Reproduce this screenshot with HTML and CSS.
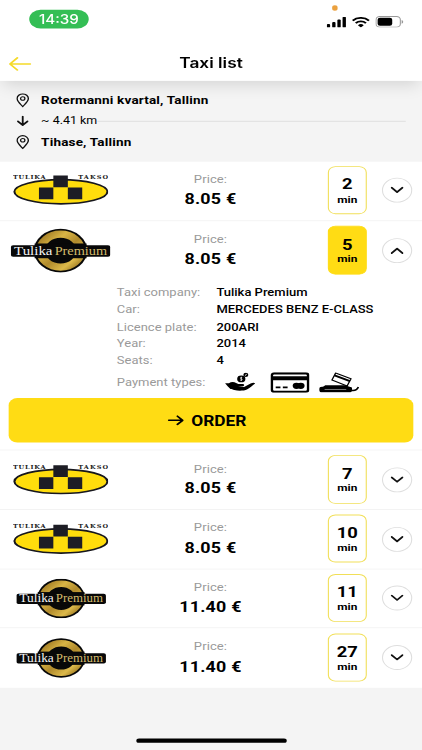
FILE: index.html
```html
<!DOCTYPE html>
<html lang="en">
<head>
    <meta charset="UTF-8">
    <meta name="viewport" content="width=device-width, initial-scale=1.0">
    <title>Taxi list</title>
    <link rel="stylesheet" href="styles.css">
</head>
<body>
    <!-- Shared icons and logos -->
    <svg class="defs" width="0" height="0">
        <defs>
            <linearGradient id="gold" x1="0" y1="0" x2="1" y2="1">
                <stop offset="0" stop-color="#9a7420"/>
                <stop offset="0.3" stop-color="#d9b545"/>
                <stop offset="0.55" stop-color="#b08a2c"/>
                <stop offset="0.8" stop-color="#dcb94a"/>
                <stop offset="1" stop-color="#94701c"/>
            </linearGradient>
            <symbol id="logo-takso" viewBox="0 0 88 38">
                <ellipse cx="44.3" cy="20.8" rx="43" ry="13.6" fill="#ffdd0c" stroke="#17171d" stroke-width="1.9"/>
                <path d="M37.3 2.5h13.4v13.3H37.3zM24 16h13.3v13.3H24zM50.7 16H64v13.3H50.7z" fill="#1d1d25"/>
                <text x="0" y="6.4" class="takso-text" textLength="30" lengthAdjust="spacing">TULIKA</text>
                <text x="60.3" y="6.4" class="takso-text" textLength="27.7" lengthAdjust="spacing">TAKSO</text>
            </symbol>
            <symbol id="logo-premium" viewBox="0 0 92 50">
                <circle cx="46" cy="25" r="24.6" fill="#080808"/>
                <circle cx="46" cy="25" r="18.5" fill="none" stroke="url(#gold)" stroke-width="8.2"/>
                <rect x="22" y="17" width="48" height="16.6" fill="#080808"/>
                <rect x="0" y="19" width="92" height="12.8" rx="2.2" fill="#080808"/>
                <text x="3" y="30" class="premium-text" fill="#f4f4f4" textLength="35.5" lengthAdjust="spacingAndGlyphs">Tulika</text>
                <text x="40.5" y="30" class="premium-text" fill="#d3bb6c" textLength="48.5" lengthAdjust="spacingAndGlyphs">Premium</text>
            </symbol>
            <symbol id="pin" viewBox="0 0 12 16">
                <path d="M6 15C4.6 13 .8 9.2.8 5.9a5.2 5.2 0 0 1 10.4 0C11.2 9.2 7.4 13 6 15z" fill="none" stroke="#111" stroke-width="1.3"/>
                <circle cx="6" cy="5.9" r="2" fill="none" stroke="#111" stroke-width="1.2"/>
            </symbol>
            <symbol id="chevron" viewBox="0 0 12 8">
                <path d="M1 1.2l5 5 5-5" fill="none" stroke="#111" stroke-width="1.8" stroke-linecap="round" stroke-linejoin="round"/>
            </symbol>
        </defs>
    </svg>

    <div class="screen">
        <header class="header">
            <div class="status-bar">
                <span class="clock">14:39</span>
                <div class="status-icons">
                    <span class="mic-dot"></span>
                    <svg class="signal" viewBox="0 0 18 12">
                        <rect x="0" y="8" width="3.1" height="4" rx="1"/>
                        <rect x="5" y="5.8" width="3.1" height="6.2" rx="1"/>
                        <rect x="9.8" y="3" width="3.1" height="9" rx="1"/>
                        <rect x="14.6" y="0" width="3.1" height="12" rx="1"/>
                    </svg>
                    <svg class="wifi" viewBox="0 0 17 12">
                        <path d="M1 4.2a10.8 10.8 0 0 1 15 0M3.8 7a6.8 6.8 0 0 1 9.4 0" fill="none" stroke="#000" stroke-width="2.1"/>
                        <path d="M8.5 12L5.8 9.3a3.9 3.9 0 0 1 5.4 0z"/>
                    </svg>
                    <svg class="battery" viewBox="0 0 26 13">
                        <rect x="0.5" y="0.5" width="22.5" height="12" rx="3.6" fill="none" stroke="#999"/>
                        <rect x="2" y="2" width="13.5" height="9" rx="2.2"/>
                        <path d="M24.2 4.4v4.2a2.2 2.2 0 0 0 0-4.2z" fill="#999"/>
                    </svg>
                </div>
            </div>
            <div class="title-bar">
                <svg class="back" viewBox="0 0 21 16">
                    <path d="M20 8H1.2M8 1.2L1.2 8 8 14.8" fill="none" stroke="#f5da28" stroke-width="1.8" stroke-linecap="round" stroke-linejoin="round"/>
                </svg>
                <h1>Taxi list</h1>
            </div>
        </header>

        <section class="route">
            <div class="route-row">
                <svg class="pin"><use href="#pin"/></svg>
                <span class="place">Rotermanni kvartal, Tallinn</span>
            </div>
            <div class="route-row">
                <svg class="down" viewBox="0 0 12 12">
                    <path d="M6 1v9.6M1.6 6.6L6 10.8l4.4-4.2" fill="none" stroke="#111" stroke-width="1.7" stroke-linecap="round" stroke-linejoin="round"/>
                </svg>
                <span class="distance">~ 4.41 km</span>
                <span class="route-line"></span>
            </div>
            <div class="route-row">
                <svg class="pin"><use href="#pin"/></svg>
                <span class="place">Tihase, Tallinn</span>
            </div>
        </section>

        <main class="list">
            <article class="taxi">
                <div class="summary">
                    <div class="logo"><svg class="takso"><use href="#logo-takso"/></svg></div>
                    <div class="price"><span>Price:</span><strong>8.05 €</strong></div>
                    <div class="eta"><b>2</b><span>min</span></div>
                    <button class="toggle"><svg><use href="#chevron"/></svg></button>
                </div>
            </article>

            <article class="taxi open">
                <div class="summary">
                    <div class="logo"><svg class="premium"><use href="#logo-premium"/></svg></div>
                    <div class="price"><span>Price:</span><strong>8.05 €</strong></div>
                    <div class="eta"><b>5</b><span>min</span></div>
                    <button class="toggle"><svg><use href="#chevron"/></svg></button>
                </div>
                <dl class="details">
                    <dt>Taxi company:</dt><dd>Tulika Premium</dd>
                    <dt>Car:</dt><dd>MERCEDES BENZ E-CLASS</dd>
                    <dt>Licence plate:</dt><dd>200ARI</dd>
                    <dt>Year:</dt><dd>2014</dd>
                    <dt>Seats:</dt><dd>4</dd>
                    <dt class="pay-label">Payment types:</dt>
                    <dd class="payments">
                        <svg class="cash" viewBox="0 0 28 22">
                            <path d="M0 12.2h3.6c2-1.6 4.6-1.7 6.6-.2l2 1.2h4.2c1.6 0 1.8 2.2.2 2.5l-4.6.3 5.6.6 6-3.9c2-1.3 3.8-1 4.2-.2-2.4 2.2-5 5-7.6 6.8-2.4 1.5-8 1.8-11.6.6-1.6-.5-2.4-1.2-3.6-1.2L2.6 16z"/>
                            <circle cx="15" cy="7.4" r="3.8"/>
                            <circle cx="19.2" cy="2.9" r="2.3"/>
                            <path d="M15.8 5.8c-1.8-.7-2.2 1-.8 1.5s1 2.1-.9 1.5M15 5v4.8" stroke="#fff" stroke-width=".7" fill="none"/>
                            <path d="M18.4 3.6l1.6-1.4" stroke="#fff" stroke-width=".9"/>
                        </svg>
                        <svg class="card" viewBox="0 0 36 23">
                            <rect x="1.2" y="1.2" width="33.6" height="20.6" rx="2.2" fill="none" stroke="#000" stroke-width="2.4"/>
                            <path d="M1 4.5h34v4.3H1z"/>
                            <path d="M4.8 17h4.4M11.4 17h4.4" stroke="#000" stroke-width="1.9"/>
                            <circle cx="24" cy="15.2" r="3.5"/>
                            <circle cx="28" cy="15.2" r="3.5"/>
                        </svg>
                        <svg class="terminal" viewBox="0 0 37 23">
                            <path d="M2.8 17L5.6 14.5H24L30 17.4V19H2.8z"/>
                            <rect x="0" y="16.2" width="30.4" height="6.3" rx="2.6"/>
                            <path d="M5 19.3h20" stroke="#999" stroke-width=".8"/>
                            <path d="M29 20.2c3.6 1 6-.2 7.2-3.6" fill="none" stroke="#000" stroke-width="1.6"/>
                            <path d="M15.2.8L29.4 7.3 25.8 15.4 11.8 8.6z" fill="#fff" stroke="#000" stroke-width="1.2"/>
                            <path d="M14.2 3.4l14.2 6.5" stroke="#000" stroke-width="2"/>
                        </svg>
                    </dd>
                </dl>
                <button class="order">
                    <svg viewBox="0 0 15 12">
                        <path d="M1 6h12.6M9 1.4L13.8 6 9 10.6" fill="none" stroke="#000" stroke-width="1.8" stroke-linecap="round" stroke-linejoin="round"/>
                    </svg>
                    <span>ORDER</span>
                </button>
            </article>

            <article class="taxi">
                <div class="summary">
                    <div class="logo"><svg class="takso"><use href="#logo-takso"/></svg></div>
                    <div class="price"><span>Price:</span><strong>8.05 €</strong></div>
                    <div class="eta"><b>7</b><span>min</span></div>
                    <button class="toggle"><svg><use href="#chevron"/></svg></button>
                </div>
            </article>

            <article class="taxi">
                <div class="summary">
                    <div class="logo"><svg class="takso"><use href="#logo-takso"/></svg></div>
                    <div class="price"><span>Price:</span><strong>8.05 €</strong></div>
                    <div class="eta"><b>10</b><span>min</span></div>
                    <button class="toggle"><svg><use href="#chevron"/></svg></button>
                </div>
            </article>

            <article class="taxi">
                <div class="summary">
                    <div class="logo"><svg class="premium"><use href="#logo-premium"/></svg></div>
                    <div class="price"><span>Price:</span><strong>11.40 €</strong></div>
                    <div class="eta"><b>11</b><span>min</span></div>
                    <button class="toggle"><svg><use href="#chevron"/></svg></button>
                </div>
            </article>

            <article class="taxi">
                <div class="summary">
                    <div class="logo"><svg class="premium"><use href="#logo-premium"/></svg></div>
                    <div class="price"><span>Price:</span><strong>11.40 €</strong></div>
                    <div class="eta"><b>27</b><span>min</span></div>
                    <button class="toggle"><svg><use href="#chevron"/></svg></button>
                </div>
            </article>
        </main>

        <footer class="footer"><span class="home-bar"></span></footer>
    </div>
</body>
</html>
```
FILE: styles.css
```css
* {
    box-sizing: border-box;
}
html {
    overflow: hidden;
}
body {
    margin: 0;
    height: 100vh;
    overflow: hidden;
    background: #f4f4f4;
    font-family: Roboto, "Liberation Sans", sans-serif;
    color: #000;
}
.defs {
    display: block;
}
.screen {
    width: 390px;
    height: 844px;
    margin-bottom: -94px;
    display: flex;
    flex-direction: column;
    transform: scale(1.082, 0.8886);
    transform-origin: 0 0;
    background: #f4f4f4;
}
svg {
    display: block;
    flex: none;
}

/* Header */
.header {
    height: 91px;
    flex: none;
    background: #fff;
    box-shadow: 0 6px 16px -3px rgba(0,0,0,0.14);
    z-index: 1;
}
.status-bar {
    height: 49px;
    padding: 10.5px 18px 0 27px;
    display: flex;
    justify-content: space-between;
    align-items: flex-start;
}
.clock {
    width: 55px;
    height: 21.5px;
    border-radius: 11px;
    background: #34be55;
    color: #fff;
    font: 500 14px/22px Inter, sans-serif;
    text-align: center;
}
.status-icons {
    position: relative;
    display: flex;
    align-items: center;
    gap: 5px;
    margin-top: 7.5px;
    margin-right: -0.5px;
}
.mic-dot {
    position: absolute;
    left: 5px;
    top: -12px;
    width: 5.5px;
    height: 5.5px;
    border-radius: 50%;
    background: #eba13f;
}
.signal {
    width: 18px;
    height: 12px;
}
.wifi {
    width: 17px;
    height: 12px;
}
.battery {
    width: 26px;
    height: 13px;
}
.title-bar {
    height: 42px;
    display: grid;
    grid-template-columns: 21px 1fr 21px;
    align-items: start;
    padding: 0 8px;
}
.back {
    width: 21px;
    height: 16px;
    margin-top: 14.5px;
}
h1 {
    margin: 10.5px 0 0;
    font: 600 16px/20px Inter, sans-serif;
    text-align: center;
}

/* Route */
.route {
    height: 91.3px;
    flex: none;
    padding: 10.2px 15px 0;
}
.route-row {
    height: 23.5px;
    display: flex;
    align-items: center;
}
.pin {
    width: 12px;
    height: 16px;
    margin-right: 11px;
}
.down {
    width: 12px;
    height: 12px;
    margin-right: 11px;
}
.place {
    font-size: 12.5px;
    font-weight: 700;
    letter-spacing: 0.15px;
}
.distance {
    font-size: 11.5px;
}
.route-line {
    flex: 1;
    height: 1px;
    background: #ddd;
}

/* Taxi rows */
.list {
    flex: none;
}
.taxi {
    height: 66.8px;
    background: #fff;
    border-bottom: 1px solid #f1f1f1;
}
.taxi:last-child {
    border-bottom: none;
}
.taxi.open {
    height: 258px;
}
.summary {
    height: 65.8px;
    display: grid;
    grid-template-columns: 112px 165px 1fr 28px;
    align-items: start;
    padding: 0.8px 9px 0 0;
}
.taxi:first-child .summary {
    padding-top: 0;
}
.logo {
    height: 64px;
    display: flex;
    justify-content: center;
    align-items: center;
}
.takso {
    width: 88px;
    height: 38px;
}
.premium {
    width: 83px;
    height: 45px;
}
.open .premium {
    width: 92px;
    height: 50px;
}
.price {
    padding-top: 11.8px;
    display: flex;
    flex-direction: column;
    align-items: center;
}
.price span {
    font-size: 12px;
    line-height: 16px;
    letter-spacing: 0.1px;
    color: #9a9a9a;
}
.price strong {
    margin-top: 4.8px;
    font-size: 16.5px;
    line-height: 20px;
    font-weight: 700;
    letter-spacing: 0.2px;
}
.eta {
    justify-self: end;
    width: 35.4px;
    height: 54.5px;
    margin: 4.3px 14.3px 0 0;
    padding-top: 9.7px;
    border: 1.3px solid #f1df58;
    border-radius: 7px;
    display: flex;
    flex-direction: column;
    align-items: center;
}
.eta b {
    font-size: 17px;
    line-height: 20px;
}
.eta span {
    margin-top: 0.5px;
    font-size: 11px;
    line-height: 13px;
    font-weight: 700;
}
.open .eta {
    background: #ffdc14;
    border-color: #ffdc14;
}
.toggle {
    width: 28px;
    height: 28px;
    margin-top: 18px;
    padding: 0;
    display: grid;
    place-items: center;
    background: #fff;
    border: 1px solid #dedede;
    border-radius: 50%;
}
.toggle svg {
    width: 12px;
    height: 8px;
}
.open .toggle svg {
    transform: rotate(180deg);
}

/* Expanded row */
.details {
    margin: 0;
    padding: 4.5px 0 0 108px;
    display: grid;
    grid-template-columns: 92px 1fr;
    grid-auto-rows: 19.3px;
    align-items: center;
    font-size: 12px;
}
.details dt {
    color: #9a9a9a;
}
.details dd {
    margin: 0;
    font-weight: 500;
}
.details .pay-label {
    padding-top: 9px;
}
.details .payments {
    display: flex;
    align-items: center;
    padding: 9px 0 0 8px;
}
.cash {
    width: 28px;
    height: 22px;
    margin-right: 14px;
}
.card {
    width: 36px;
    height: 23px;
    margin-right: 9px;
}
.terminal {
    width: 37px;
    height: 23px;
}
.order {
    width: 374px;
    height: 50px;
    margin: 13.3px 8px 0;
    padding: 0 7px 0 0;
    border: none;
    border-radius: 8px;
    background: #ffdc14;
    display: flex;
    justify-content: center;
    align-items: center;
    gap: 6.5px;
    font: 700 16px Roboto, sans-serif;
    color: #000;
}
.order svg {
    width: 15px;
    height: 12px;
}

/* Logo lettering */
.takso-text {
    font: 700 6px "DejaVu Serif", serif;
    fill: #222;
}
.premium-text {
    font: 500 14.5px "Liberation Serif", serif;
}

.footer {
    flex: 1;
    display: flex;
    justify-content: center;
    align-items: flex-end;
    padding-bottom: 8px;
}
.home-bar {
    width: 139px;
    height: 5px;
    border-radius: 3px;
    background: #000;
}
```
